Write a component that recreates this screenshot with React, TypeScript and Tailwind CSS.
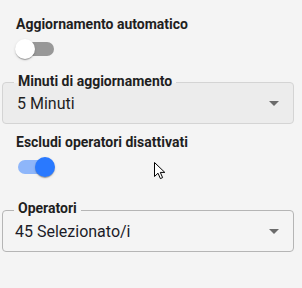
import React from "react";

function Toggle({ on }: { on: boolean }) {
  return (
    <div className="relative ml-[6px] h-[20px] w-[58px]">
      <div
        className={
          on
            ? "absolute left-[12px] top-[3px] h-[14px] w-[36px] rounded-full bg-[#8eb6fa]"
            : "absolute left-[12px] top-[3px] h-[14px] w-[36px] rounded-full bg-[#989898]"
        }
      />
      <div
        className={
          on
            ? "absolute left-[29px] top-0 h-[20px] w-[20px] rounded-full bg-[#2979ff] shadow-[0_2px_1px_-1px_rgba(0,0,0,0.2),0_1px_1px_0_rgba(0,0,0,0.14),0_1px_3px_0_rgba(0,0,0,0.12)]"
            : "absolute left-[9px] top-0 h-[20px] w-[20px] rounded-full bg-white shadow-[0_2px_1px_-1px_rgba(0,0,0,0.2),0_1px_1px_0_rgba(0,0,0,0.14),0_1px_3px_0_rgba(0,0,0,0.12)]"
        }
      />
    </div>
  );
}

function DropArrow() {
  return (
    <svg viewBox="0 0 24 24" className="ml-auto mr-[7px] h-[24px] w-[24px] fill-[#6b6b6b]">
      <path d="M7 10l5 5 5-5z" />
    </svg>
  );
}

export default function App() {
  return (
    <div
      className="relative h-[288px] w-[302px] overflow-hidden bg-[#f4f4f4] text-[#1f1f1f]"
      style={{ fontFamily: "Roboto, 'Liberation Sans', sans-serif" }}
    >
      <div className="flex flex-col pt-[14px]">
        <div className="pl-[16px] text-[14px] font-bold leading-5">Aggiornamento automatico</div>
        <div className="mt-[5px]">
          <Toggle on={false} />
        </div>

        {/* Minuti di aggiornamento */}
        <div className="relative ml-[2px] mt-[23px] flex h-[42px] w-[292px] items-center rounded-[4px] border border-[#d4d4d4] bg-[#ececec]">
          <div className="absolute left-[11px] top-[-12px] px-[4px] text-[14px] font-bold leading-5">
            <span className="absolute inset-x-0 top-[11px] h-[1px] bg-[#f4f4f4]" />
            <span className="relative">Minuti di aggiornamento</span>
          </div>
          <span className="mt-[2px] pl-[14px] text-[16px] leading-6">5 Minuti</span>
          <DropArrow />
        </div>

        <div className="mt-[8px] pl-[16px] text-[14px] font-bold leading-5">Escludi operatori disattivati</div>
        <div className="mt-[5px]">
          <Toggle on={true} />
        </div>

        {/* Operatori */}
        <div className="relative ml-[2px] mt-[33px] flex h-[42px] w-[292px] items-center rounded-[4px] border border-[#b5b5b5]">
          <div className="absolute left-[11px] top-[-13px] px-[4px] text-[14px] font-bold leading-5">
            <span className="absolute inset-x-0 top-[12px] h-[1px] bg-[#f4f4f4]" />
            <span className="relative">Operatori</span>
          </div>
          <span className="mt-[2px] pl-[12px] text-[16px] leading-6 text-[#1c1c28]">45 Selezionato/i</span>
          <DropArrow />
        </div>
      </div>

      {/* mouse pointer */}
      <svg className="absolute left-[153px] top-[161px]" width="14" height="20" viewBox="0 0 14 20">
        <path
          d="M1.5 1.5 L1.5 15.5 L5 12.2 L7.4 17.6 L9.6 16.6 L7.3 11.4 L11.8 11.4 Z"
          fill="#ffffff"
          stroke="#000000"
          strokeWidth="1"
          strokeLinejoin="miter"
        />
      </svg>
    </div>
  );
}
